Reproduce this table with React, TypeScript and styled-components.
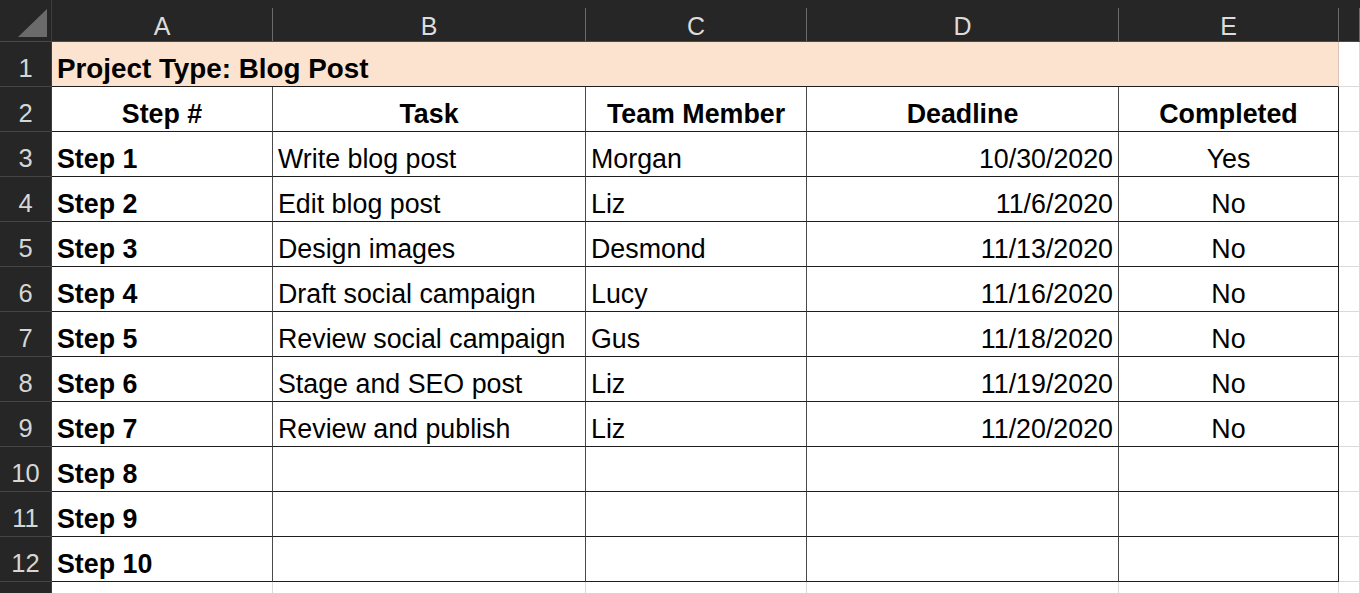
import React from "react";
import styled, { createGlobalStyle, css } from "styled-components";

const Global = createGlobalStyle`
  html, body { margin: 0; padding: 0; background: #ffffff; overflow: hidden; }
  body { font-family: "Liberation Sans", Arial, sans-serif; }
`;

const COLS = ["A", "B", "C", "D", "E", ""];

const Sheet = styled.div`
  display: grid;
  grid-template-columns: 52px 221px 313px 221px 312px 220px 1fr;
  grid-template-rows: 42px repeat(13, 45px);
  width: 1360px;
  height: 593px;
  overflow: hidden;
  font-family: "Liberation Sans", Arial, sans-serif;
`;

const Corner = styled.div`
  background: #262626;
  border-right: 1px solid #3c3c3c;
  border-bottom: 1px solid #4a4a4a;
  display: flex;
  align-items: flex-end;
  justify-content: flex-end;
  padding: 0 3px 3px 0;
  box-sizing: border-box;
`;

const ColHead = styled.div`
  background: #262626;
  border-bottom: 1px solid #4a4a4a;
  display: flex;
  align-items: flex-end;
  justify-content: center;
  box-sizing: border-box;
  padding-top: 8px;
`;

const ColHeadInner = styled.div`
  flex: 1;
  height: 33px;
  border-right: 1px solid #6a6a6a;
  color: #dcdcdc;
  font-size: 25px;
  line-height: 33px;
  text-align: center;
  box-sizing: border-box;
  padding-top: 2px;
`;

const RowHead = styled.div`
  background: #262626;
  border-right: 1px solid #3c3c3c;
  border-bottom: 1px solid #464646;
  color: #d6d6d6;
  font-size: 25.5px;
  display: flex;
  align-items: flex-end;
  justify-content: center;
  padding-bottom: 3px;
  box-sizing: border-box;
`;

type CellProps = {
  $align?: "left" | "center" | "right";
  $bold?: boolean;
  $outside?: boolean;
  $lastCol?: boolean;
};

const Cell = styled.div<CellProps>`
  box-sizing: border-box;
  display: flex;
  align-items: flex-end;
  padding: 0 5px 1px 5px;
  font-size: 26.8px;
  line-height: 1.15;
  color: #000;
  white-space: nowrap;
  overflow: hidden;
  background: #fff;
  justify-content: ${(p) =>
    p.$align === "center" ? "center" : p.$align === "right" ? "flex-end" : "flex-start"};
  font-weight: ${(p) => (p.$bold ? 700 : 400)};
  ${(p) =>
    p.$outside
      ? css`
          border-right: 1px solid #dadada;
          border-bottom: 1px solid #dadada;
        `
      : css`
          border-right: 1px solid ${p.$lastCol ? "#1e1e1e" : "#4a4a4a"};
          border-bottom: 1px solid #1e1e1e;
        `}
`;

const TitleCell = styled.div`
  grid-column: 2 / 7;
  box-sizing: border-box;
  background: #fce3cf;
  border-bottom: 1px solid #1e1e1e;
  border-right: 1px solid #d9c6b8;
  display: flex;
  align-items: flex-end;
  padding: 0 5px 1px 5px;
  font-size: 27.8px;
  line-height: 1.15;
  font-weight: 700;
  color: #000;
`;

const BelowCell = styled.div`
  box-sizing: border-box;
  background: #fff;
  border-right: 1px solid #dadada;
`;

const Triangle = () => (
  <svg width="30" height="29" viewBox="0 0 30 29">
    <polygon points="0,28 29,0 29,28" fill="#6b6b6b" />
  </svg>
);

type Row = [string, string, string, string, string];

const rows: Row[] = [
  ["Step 1", "Write blog post", "Morgan", "10/30/2020", "Yes"],
  ["Step 2", "Edit blog post", "Liz", "11/6/2020", "No"],
  ["Step 3", "Design images", "Desmond", "11/13/2020", "No"],
  ["Step 4", "Draft social campaign", "Lucy", "11/16/2020", "No"],
  ["Step 5", "Review social campaign", "Gus", "11/18/2020", "No"],
  ["Step 6", "Stage and SEO post", "Liz", "11/19/2020", "No"],
  ["Step 7", "Review and publish", "Liz", "11/20/2020", "No"],
  ["Step 8", "", "", "", ""],
  ["Step 9", "", "", "", ""],
  ["Step 10", "", "", "", ""],
];

export default function App() {
  return (
    <>
      <Global />
      <Sheet>
        <Corner>
          <Triangle />
        </Corner>
        {COLS.map((c, i) => (
          <ColHead key={i}>
            <ColHeadInner>{c}</ColHeadInner>
          </ColHead>
        ))}

        <RowHead>1</RowHead>
        <TitleCell>Project Type: Blog Post</TitleCell>
        <Cell $outside />

        <RowHead>2</RowHead>
        <Cell $align="center" $bold>Step #</Cell>
        <Cell $align="center" $bold>Task</Cell>
        <Cell $align="center" $bold>Team Member</Cell>
        <Cell $align="center" $bold>Deadline</Cell>
        <Cell $align="center" $bold $lastCol>Completed</Cell>
        <Cell $outside />

        {rows.map((r, i) => (
          <React.Fragment key={i}>
            <RowHead>{i + 3}</RowHead>
            <Cell $bold>{r[0]}</Cell>
            <Cell>{r[1]}</Cell>
            <Cell>{r[2]}</Cell>
            <Cell $align="right">{r[3]}</Cell>
            <Cell $align="center" $lastCol>{r[4]}</Cell>
            <Cell $outside />
          </React.Fragment>
        ))}

        <RowHead />
        {COLS.map((c, i) => (
          <BelowCell key={i} />
        ))}
      </Sheet>
    </>
  );
}
